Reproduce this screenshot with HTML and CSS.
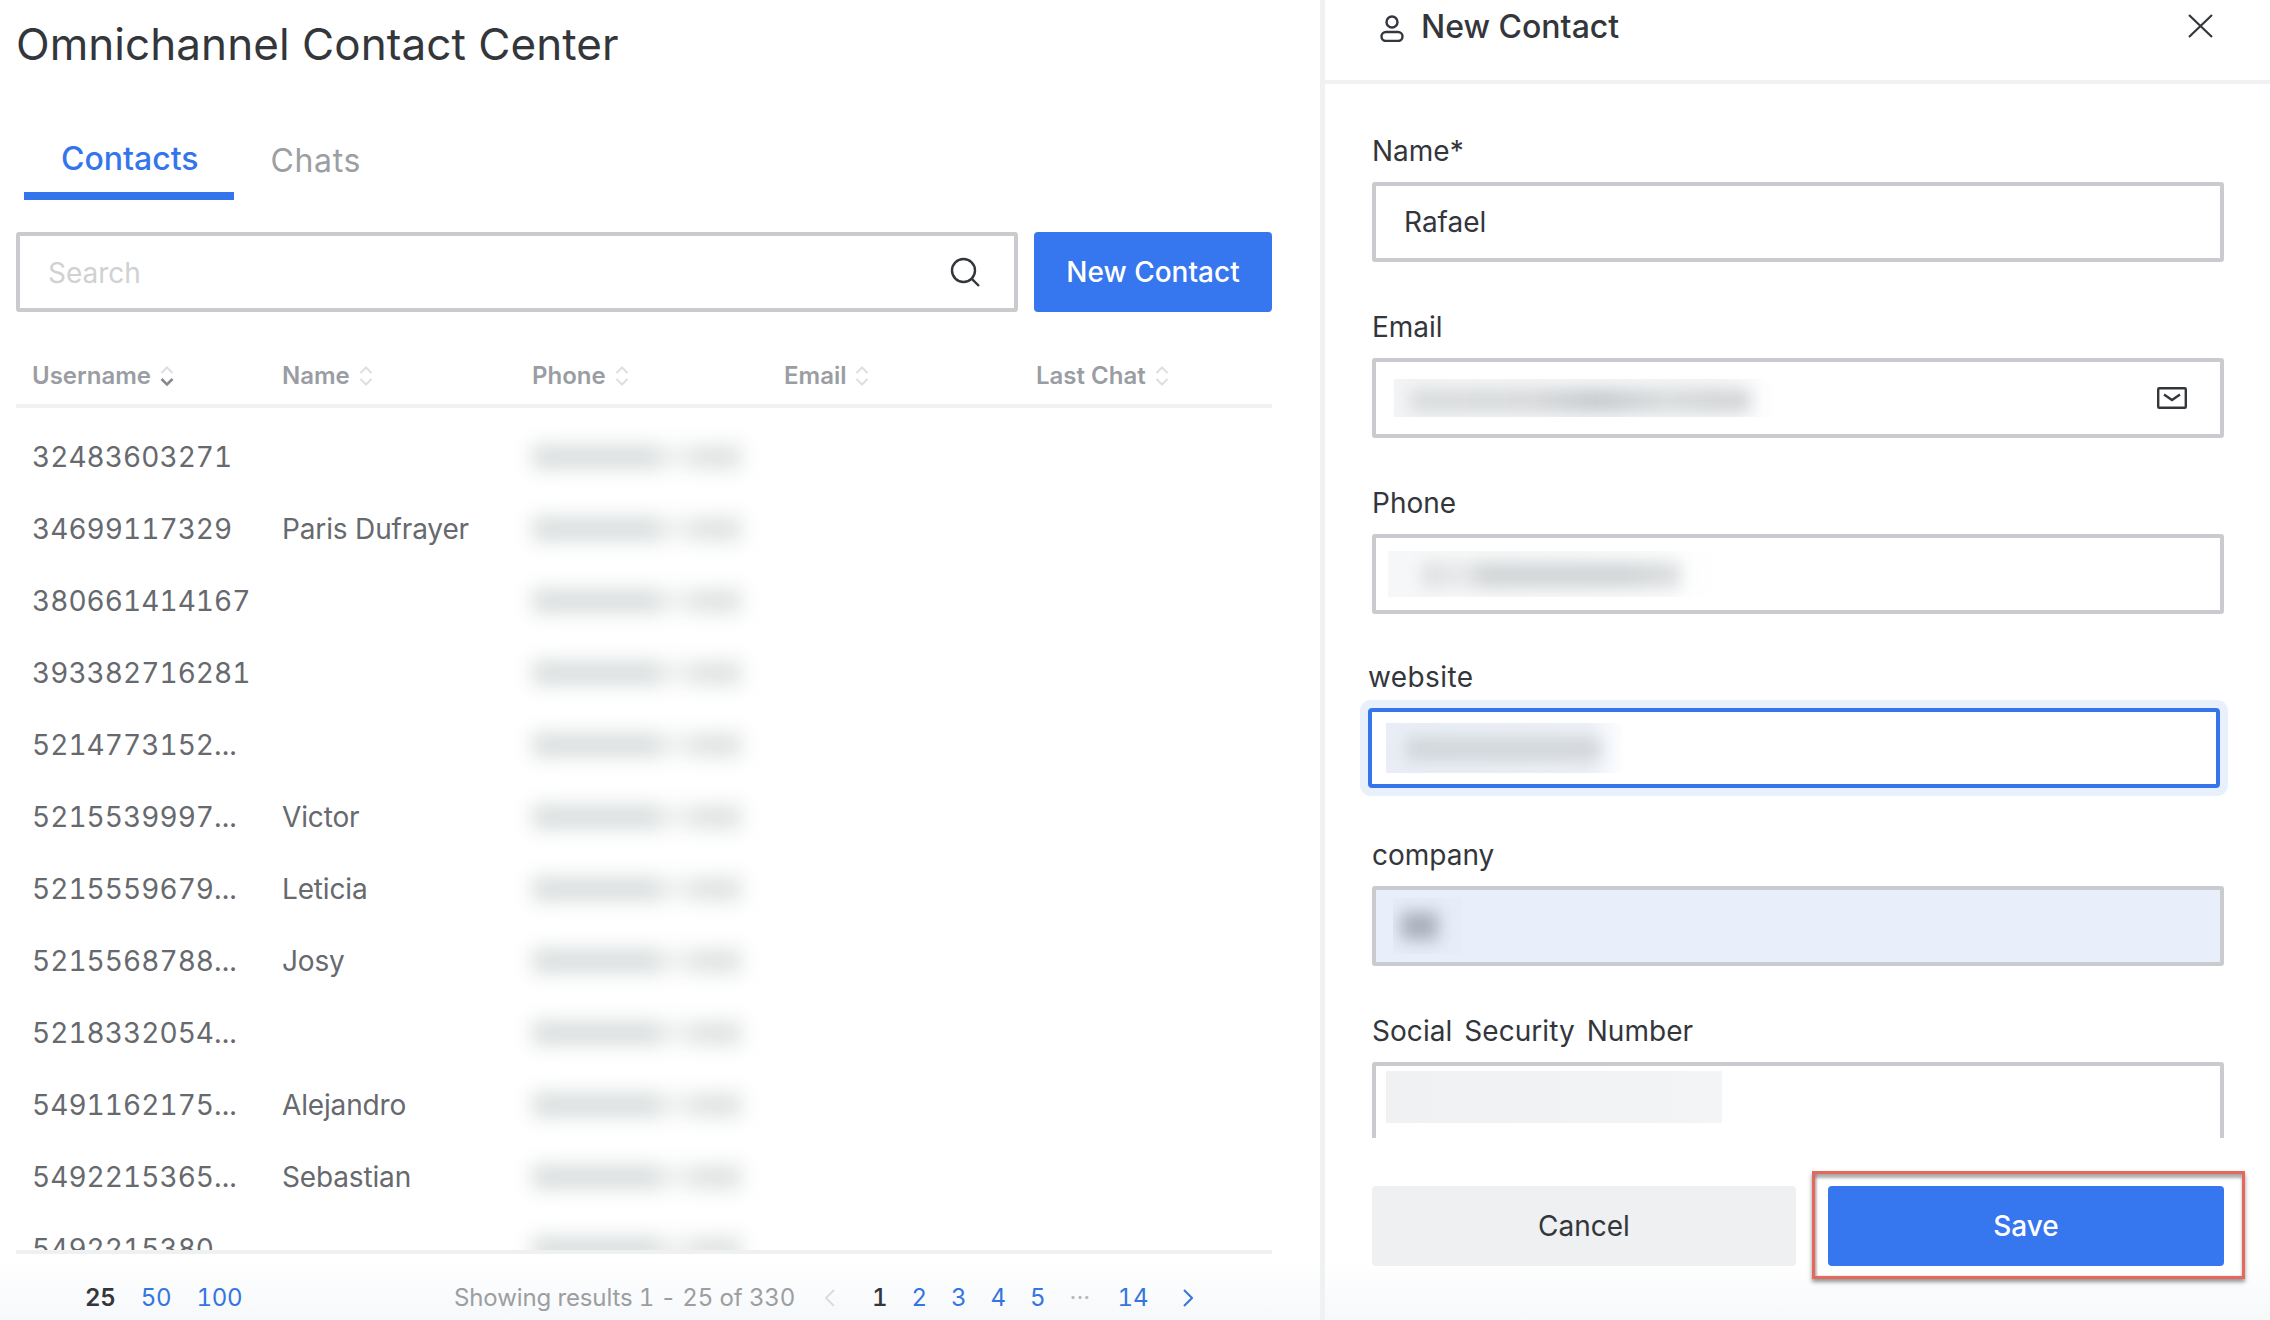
FILE: index.html
```html
<!DOCTYPE html>
<html lang="en">
<head>
<meta charset="utf-8">
<title>Omnichannel Contact Center</title>
<link rel="stylesheet" href="styles.css">
</head>
<body>
<main class="list-panel">
  <h1 class="page-title">Omnichannel Contact Center</h1>
  <nav class="tabs">
    <a class="tab tab-active">Contacts</a>
    <a class="tab tab-muted">Chats</a>
  </nav>
  <div class="toolbar">
    <div class="search">
      <span class="search-placeholder">Search</span>
      <svg class="search-icon" viewBox="0 0 30 30" fill="none" stroke="#33363b" stroke-width="2.4"><circle cx="13.5" cy="13.5" r="11.5"/><path d="M21.8 21.8 29 29"/></svg>
    </div>
    <button class="btn btn-primary btn-new">New Contact</button>
  </div>
  <div class="table-head">
    <div class="th">Username<svg class="sort" viewBox="0 0 14 22" fill="none" stroke-width="2"><path d="M1.5 8 7 2.500 12.500 8" stroke="#dcdee0"/><path d="M1.5 14 7 19.500 12.500 14" stroke="#85888d" stroke-width="2.500"/></svg></div>
    <div class="th">Name<svg class="sort" viewBox="0 0 14 22" fill="none" stroke="#dcdee0" stroke-width="2"><path d="M1.500 8 7 2.500 12.500 8"/><path d="M1.500 14 7 19.500 12.500 14"/></svg></div>
    <div class="th">Phone<svg class="sort" viewBox="0 0 14 22" fill="none" stroke="#dcdee0" stroke-width="2"><path d="M1.500 8 7 2.500 12.500 8"/><path d="M1.500 14 7 19.500 12.500 14"/></svg></div>
    <div class="th">Email<svg class="sort" viewBox="0 0 14 22" fill="none" stroke="#dcdee0" stroke-width="2"><path d="M1.500 8 7 2.500 12.500 8"/><path d="M1.500 14 7 19.500 12.500 14"/></svg></div>
    <div class="th">Last Chat<svg class="sort" viewBox="0 0 14 22" fill="none" stroke="#dcdee0" stroke-width="2"><path d="M1.500 8 7 2.500 12.500 8"/><path d="M1.500 14 7 19.500 12.500 14"/></svg></div>
  </div>
  <div class="table-body">
    <div class="row"><div class="td td-id">32483603271</div><div class="td"></div><div class="td"><span class="smudge"></span></div></div>
    <div class="row"><div class="td td-id">34699117329</div><div class="td">Paris Dufrayer</div><div class="td"><span class="smudge"></span></div></div>
    <div class="row"><div class="td td-id">380661414167</div><div class="td"></div><div class="td"><span class="smudge"></span></div></div>
    <div class="row"><div class="td td-id">393382716281</div><div class="td"></div><div class="td"><span class="smudge"></span></div></div>
    <div class="row"><div class="td td-id">5214773152...</div><div class="td"></div><div class="td"><span class="smudge"></span></div></div>
    <div class="row"><div class="td td-id">5215539997...</div><div class="td">Victor</div><div class="td"><span class="smudge"></span></div></div>
    <div class="row"><div class="td td-id">5215559679...</div><div class="td">Leticia</div><div class="td"><span class="smudge"></span></div></div>
    <div class="row"><div class="td td-id">5215568788...</div><div class="td">Josy</div><div class="td"><span class="smudge"></span></div></div>
    <div class="row"><div class="td td-id">5218332054...</div><div class="td"></div><div class="td"><span class="smudge"></span></div></div>
    <div class="row"><div class="td td-id">5491162175...</div><div class="td">Alejandro</div><div class="td"><span class="smudge"></span></div></div>
    <div class="row"><div class="td td-id">5492215365...</div><div class="td">Sebastian</div><div class="td"><span class="smudge"></span></div></div>
    <div class="row"><div class="td td-id">5492215380...</div><div class="td"></div><div class="td"><span class="smudge"></span></div></div>
  </div>
  <footer class="pager">
    <div class="page-sizes">
      <span class="size-current">25</span>
      <a class="link">50</a>
      <a class="link">100</a>
    </div>
    <div class="pages">
      <span class="results">Showing results 1 - 25 of 330</span>
      <svg class="chev" viewBox="0 0 10 18" fill="none" stroke="#d9dbdd" stroke-width="1.800"><path d="M9 1 1 9l8 8"/></svg>
      <span class="page page-current">1</span>
      <a class="page link">2</a>
      <a class="page link">3</a>
      <a class="page link">4</a>
      <a class="page link">5</a>
      <span class="page-dots">···</span>
      <a class="page page-last link">14</a>
      <svg class="chev chev-next" viewBox="0 0 10 18" fill="none" stroke="#3575e0" stroke-width="2"><path d="m1 1 8 8-8 8"/></svg>
    </div>
  </footer>
</main>
<aside class="drawer">
  <header class="drawer-head">
    <svg class="user-icon" viewBox="0 0 24 27" fill="none" stroke="#33363b" stroke-width="2.400"><circle cx="12" cy="7" r="5.500"/><rect x="1.500" y="17" width="21" height="9" rx="4.500"/></svg>
    <h2 class="drawer-title">New Contact</h2>
    <svg class="close-icon" viewBox="0 0 25 24" fill="none" stroke="#33363b" stroke-width="2.200"><path d="M1 1l23 22M24 1 1 23"/></svg>
  </header>
  <form class="form">
    <div class="field">
      <label class="label">Name*</label>
      <div class="input"><span class="value">Rafael</span></div>
    </div>
    <div class="field">
      <label class="label">Email</label>
      <div class="input">
        <span class="redact redact-email"><span class="redact-ink"></span></span>
        <svg class="mail-icon" viewBox="0 0 30 22" fill="none" stroke="#33363b" stroke-width="2.400"><rect x="1.200" y="1.200" width="27.600" height="19.600" rx="1"/><path d="m7 7.500 8 5.500 8-5.500"/></svg>
      </div>
    </div>
    <div class="field">
      <label class="label">Phone</label>
      <div class="input">
        <span class="redact redact-phone"><span class="redact-ink"></span></span>
      </div>
    </div>
    <div class="field field-focus">
      <label class="label label-site">website</label>
      <div class="input input-focus">
        <span class="redact redact-site"><span class="redact-ink"></span></span>
      </div>
    </div>
    <div class="field">
      <label class="label">company</label>
      <div class="input input-autofill">
        <span class="redact redact-company"><span class="redact-ink"></span></span>
      </div>
    </div>
    <div class="field">
      <label class="label label-wide">Social Security Number</label>
      <div class="input">
        <span class="redact redact-ssn"></span>
      </div>
    </div>
  </form>
  <div class="drawer-actions">
    <button class="btn btn-cancel">Cancel</button>
    <div class="save-wrap">
      <button class="btn btn-primary btn-save">Save</button>
      <span class="annotation"></span>
    </div>
  </div>
</aside>
</body>
</html>
```
FILE: styles.css
```css
* { box-sizing: border-box; }
html, body { margin: 0; padding: 0; }
body {
  width: 2270px;
  height: 1320px;
  overflow: hidden;
  display: flex;
  font-family: "Inter", "Liberation Sans", sans-serif;
  color: #33363b;
  background: linear-gradient(#fff 0, #fff 1262px, #f6f8fa 1320px);
}
a { text-decoration: none; }
button { font-family: inherit; border: 0; cursor: pointer; }

/* left panel */
.list-panel {
  width: 1325px;
  height: 1320px;
  padding: 14px 48px 0 16px;
  border-right: 5px solid #f0f1f2;
  flex: none;
}
.page-title {
  margin: 0;
  font-size: 44px;
  line-height: 60px;
  font-weight: 400;
  letter-spacing: .06px;
  color: #33363b;
}
.tabs { display: flex; margin: 65px 0 0 8px; height: 61px; }
.tab {
  padding: 0 35px 0 37px;
  font-size: 32px;
  line-height: 40px;
}
.tab-active {
  color: #3575ec;
  font-weight: 500;
  border-bottom: 8px solid #3575ec;
}
.tab-muted { color: #9b9ea3; padding-top: 2px; letter-spacing: .6px; }

.toolbar { display: flex; gap: 16px; margin-top: 32px; height: 80px; }
.search {
  flex: 1;
  display: flex;
  align-items: center;
  justify-content: space-between;
  padding: 2px 34px 0 28px;
  border: 4px solid #c9cbce;
  border-radius: 3px;
}
.search-placeholder { font-size: 28px; color: #cfd1d3; }
.search-icon { width: 30px; height: 30px; margin-top: -2px; }
.btn {
  display: flex;
  align-items: center;
  justify-content: center;
  border-radius: 4px;
  font-size: 28px;
}
.btn-primary { background: #3676ee; color: #fff; font-weight: 500; }
.btn-new { width: 238px; height: 80px; }

.table-head,
.row {
  display: grid;
  grid-template-columns: 250px 250px 252px 252px 1fr;
  padding-left: 16px;
}
.table-head {
  height: 96px;
  padding-bottom: 12px;
  align-items: end;
  border-bottom: 4px solid #f0f1f2;
}
.th {
  display: flex;
  align-items: center;
  gap: 9px;
  font-size: 24px;
  line-height: 32px;
  font-weight: 600;
  color: #9a9da3;
}
.sort { width: 14px; height: 22px; }
.table-body {
  height: 842px;
  padding-top: 13px;
  overflow: hidden;
}
.row { height: 72px; align-items: center; }
.td {
  font-size: 28px;
  line-height: 36px;
  color: #66696e;
  letter-spacing: -.15px;
  white-space: nowrap;
}
.td-id {
  font-variant-numeric: tabular-nums;
  letter-spacing: .05px;
}
.smudge {
  display: block;
  width: 210px;
  height: 24px;
  margin-left: 0;
  background: linear-gradient(90deg, #d9dddd 0, #d9dddd 58%, #eef0f0 64%, #eef0f0 72%, #dfe2e2 80%, #dfe2e2 100%);
  filter: blur(10px);
}

.pager {
  height: 66px;
  border-top: 4px solid #eff0f1;
  display: flex;
  align-items: center;
  font-size: 24px;
  padding-top: 25px;
  font-variant-numeric: tabular-nums;
}
.page-sizes { display: flex; gap: 25px; margin-left: 69px; width: 369px; font-size: 24px; letter-spacing: -.2px; }
.size-current { font-weight: 600; color: #33363b; }
.link { color: #3575e0; }
.pages { display: flex; align-items: center; }
.results { color: #9c9ea1; width: 371px; white-space: nowrap; letter-spacing: -.12px; }
.chev { width: 10px; height: 18px; flex: none; }
.page { width: 39.500px; }
.page-current { margin-left: 37px; color: #33363b; font-weight: 500; }
.page-dots { width: 48px; color: #b5b7ba; letter-spacing: 0; }
.page-last { width: 65px; }
.chev-next { flex: none; }

/* right drawer */
.drawer {
  width: 945px;
  height: 1320px;
  display: flex;
  flex-direction: column;
}
.drawer-head {
  height: 84px;
  flex: none;
  display: flex;
  align-items: flex-start;
  padding: 0 57px 0 55px;
  border-bottom: 4px solid #f0f1f2;
}
.user-icon { width: 24px; height: 27px; margin-top: 15px; flex: none; }
.drawer-title {
  margin: 7px 0 0 17px;
  font-size: 32px;
  line-height: 40px;
  font-weight: 500;
  flex: 1;
}
.close-icon { width: 25px; height: 24px; margin-top: 14px; flex: none; }

.form {
  height: 1054px;
  flex: none;
  overflow: hidden;
  padding: 49px 46px 0 47px;
}
.field { margin-bottom: 47px; }
.field-focus { margin: -2px 4px 49px -4px; }
.label {
  display: block;
  font-size: 28px;
  line-height: 34px;
  padding-top: 1px;
  margin-bottom: 14px;
}
.label-wide { word-spacing: 4px; letter-spacing: .05px; }
.label-site { letter-spacing: .4px; }
.input {
  height: 80px;
  border: 4px solid #c9cbce;
  border-radius: 3px;
  display: flex;
  align-items: center;
  justify-content: space-between;
  position: relative;
}
.input-focus {
  border-color: #3575ec;
  box-shadow: 0 0 0 8px #e8f0fb;
  border-radius: 4px;
}
.input-autofill { background: #e8effb; }
.value { font-size: 28px; margin-left: 28px; }
.redact { display: block; overflow: hidden; flex: none; }
.redact-ink { display: block; height: 100%; filter: blur(8px); }
.redact-email { width: 382px; height: 38px; margin-left: 18px; background: linear-gradient(90deg, #f3f4f5, #f6f7f8 85%, #fff); padding: 10px 26px 5px 16px; }
.redact-email .redact-ink { background: linear-gradient(90deg, #d9dcde, #d6d9db 35%, #c6c9cc 55%, #d8dbdd 75%, #d2d5d7 90%); }
.redact-phone { width: 334px; height: 46px; margin-left: 12px; background: linear-gradient(90deg, #f6f7f8, #fafbfb 70%, #fff); padding: 11px 42px 9px 34px; }
.redact-phone .redact-ink { background: linear-gradient(90deg, #dcdfe0, #e8eaea 16%, #d2d5d7 24%, #d2d5d7 80%, #dcdfe0); }
.redact-site { width: 236px; height: 50px; margin-left: 14px; background: linear-gradient(90deg, #e9eef6, #edf1f7 85%, #fcfdff); padding: 14px 22px 12px 20px; }
.redact-site .redact-ink { background: #d2d6d9; }
.redact-company { width: 69px; height: 56px; margin-left: 17px; padding: 14px 24px 14px 8px; background: #e6ecf8; }
.redact-company .redact-ink { background: #aab0bc; }
.redact-ssn { width: 336px; height: 52px; margin: -10px 0 0 10px; background: linear-gradient(90deg, #eff1f2, #f1f3f5 85%, #f4f5f7); }
.mail-icon { width: 30px; height: 22px; margin-right: 33px; }

.drawer-actions {
  flex: none;
  display: grid;
  grid-template-columns: 424px 396px;
  gap: 32px;
  padding: 48px 46px 0 47px;
}
.btn-cancel { height: 80px; width: 100%; background: #eef0f1; color: #33363b; }
.save-wrap { position: relative; height: 80px; }
.btn-save { width: 100%; height: 100%; }
.annotation {
  position: absolute;
  top: -15px;
  left: -16px;
  right: -21px;
  bottom: -13px;
  border: 3px solid #e4685c;
  box-shadow: 0 3px 4px rgba(60, 60, 60, .55), inset 0 4px 3px rgba(60, 60, 60, .4), inset 2px 0 2px rgba(60, 60, 60, .25);
  pointer-events: none;
}
```
